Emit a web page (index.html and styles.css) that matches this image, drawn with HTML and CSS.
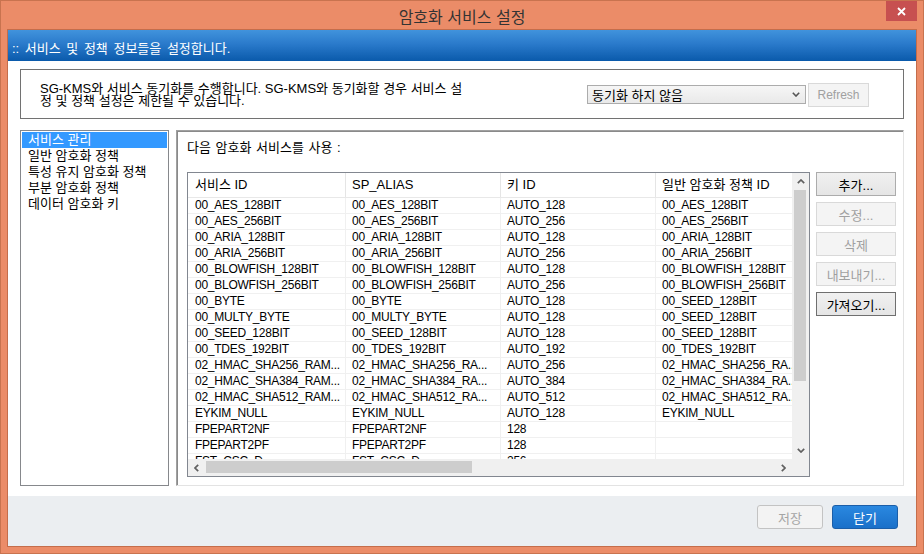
FILE: index.html
```html
<!DOCTYPE html>
<html lang="ko">
<head>
<meta charset="utf-8">
<title>암호화 서비스 설정</title>
<link rel="stylesheet" href="styles.css">
</head>
<body>
<div class="window">
  <div class="titlebar">
    <span></span>
    <span class="title">암호화 서비스 설정</span>
    <button class="close" type="button" aria-label="닫기">
      <svg width="9" height="9" viewBox="0 0 9 9"><path d="M1 1 L8 8 M8 1 L1 8" stroke="#fff" stroke-width="1.8" fill="none"/></svg>
    </button>
  </div>
  <div class="client">
    <div class="banner">:: 서비스 및 정책 정보들을 설정합니다.</div>
    <div class="main">
      <div class="info">
        <p class="info-text">SG-KMS와 서비스 동기화를 수행합니다. SG-KMS와 동기화할 경우 서비스 설<br>정 및 정책 설정은 제한될 수 있습니다.</p>
        <div class="info-controls">
          <div class="combo">
            <span>동기화 하지 않음</span>
            <svg width="8" height="5" viewBox="0 0 8 5"><polyline points="0.8,0.8 4,4 7.2,0.8" fill="none" stroke="#555" stroke-width="1.6"/></svg>
          </div>
          <button class="btn btn-small" type="button" disabled>Refresh</button>
        </div>
      </div>
      <div class="body">
        <ul class="nav">
          <li class="selected">서비스 관리</li>
          <li>일반 암호화 정책</li>
          <li>특성 유지 암호화 정책</li>
          <li>부분 암호화 정책</li>
          <li>데이터 암호화 키</li>
        </ul>
        <div class="panel">
          <div class="panel-label">다음 암호화 서비스를 사용 :</div>
          <div class="panel-content">
            <div class="listview">
              <div class="viewport">
                <div class="row head">
                  <div class="cell">서비스 ID</div>
                  <div class="cell">SP_ALIAS</div>
                  <div class="cell">키 ID</div>
                  <div class="cell">일반 암호화 정책 ID</div>
                </div>
                <div class="row"><div class="cell">00_AES_128BIT</div><div class="cell">00_AES_128BIT</div><div class="cell">AUTO_128</div><div class="cell">00_AES_128BIT</div></div>
                <div class="row"><div class="cell">00_AES_256BIT</div><div class="cell">00_AES_256BIT</div><div class="cell">AUTO_256</div><div class="cell">00_AES_256BIT</div></div>
                <div class="row"><div class="cell">00_ARIA_128BIT</div><div class="cell">00_ARIA_128BIT</div><div class="cell">AUTO_128</div><div class="cell">00_ARIA_128BIT</div></div>
                <div class="row"><div class="cell">00_ARIA_256BIT</div><div class="cell">00_ARIA_256BIT</div><div class="cell">AUTO_256</div><div class="cell">00_ARIA_256BIT</div></div>
                <div class="row"><div class="cell">00_BLOWFISH_128BIT</div><div class="cell">00_BLOWFISH_128BIT</div><div class="cell">AUTO_128</div><div class="cell">00_BLOWFISH_128BIT</div></div>
                <div class="row"><div class="cell">00_BLOWFISH_256BIT</div><div class="cell">00_BLOWFISH_256BIT</div><div class="cell">AUTO_256</div><div class="cell">00_BLOWFISH_256BIT</div></div>
                <div class="row"><div class="cell">00_BYTE</div><div class="cell">00_BYTE</div><div class="cell">AUTO_128</div><div class="cell">00_SEED_128BIT</div></div>
                <div class="row"><div class="cell">00_MULTY_BYTE</div><div class="cell">00_MULTY_BYTE</div><div class="cell">AUTO_128</div><div class="cell">00_SEED_128BIT</div></div>
                <div class="row"><div class="cell">00_SEED_128BIT</div><div class="cell">00_SEED_128BIT</div><div class="cell">AUTO_128</div><div class="cell">00_SEED_128BIT</div></div>
                <div class="row"><div class="cell">00_TDES_192BIT</div><div class="cell">00_TDES_192BIT</div><div class="cell">AUTO_192</div><div class="cell">00_TDES_192BIT</div></div>
                <div class="row"><div class="cell">02_HMAC_SHA256_RAM...</div><div class="cell">02_HMAC_SHA256_RA...</div><div class="cell">AUTO_256</div><div class="cell">02_HMAC_SHA256_RA...</div></div>
                <div class="row"><div class="cell">02_HMAC_SHA384_RAM...</div><div class="cell">02_HMAC_SHA384_RA...</div><div class="cell">AUTO_384</div><div class="cell">02_HMAC_SHA384_RA...</div></div>
                <div class="row"><div class="cell">02_HMAC_SHA512_RAM...</div><div class="cell">02_HMAC_SHA512_RA...</div><div class="cell">AUTO_512</div><div class="cell">02_HMAC_SHA512_RA...</div></div>
                <div class="row"><div class="cell">EYKIM_NULL</div><div class="cell">EYKIM_NULL</div><div class="cell">AUTO_128</div><div class="cell">EYKIM_NULL</div></div>
                <div class="row"><div class="cell">FPEPART2NF</div><div class="cell">FPEPART2NF</div><div class="cell">128</div><div class="cell"></div></div>
                <div class="row"><div class="cell">FPEPART2PF</div><div class="cell">FPEPART2PF</div><div class="cell">128</div><div class="cell"></div></div>
                <div class="row"><div class="cell">FST_CSC_D</div><div class="cell">FST_CSC_D</div><div class="cell">256</div><div class="cell"></div></div>
              </div>
              <div class="vscroll">
                <div class="arrow"><svg width="8" height="5" viewBox="0 0 8 5"><polyline points="0.8,4.2 4,1 7.2,4.2" fill="none" stroke="#606060" stroke-width="1.7"/></svg></div>
                <div class="track"><div class="thumb vthumb"></div></div>
                <div class="arrow"><svg width="8" height="5" viewBox="0 0 8 5"><polyline points="0.8,0.8 4,4 7.2,0.8" fill="none" stroke="#606060" stroke-width="1.7"/></svg></div>
              </div>
              <div class="hscroll">
                <div class="arrow"><svg width="5" height="8" viewBox="0 0 5 8"><polyline points="4.2,0.8 1,4 4.2,7.2" fill="none" stroke="#606060" stroke-width="1.7"/></svg></div>
                <div class="track"><div class="thumb hthumb"></div></div>
                <div class="arrow"><svg width="5" height="8" viewBox="0 0 5 8"><polyline points="0.8,0.8 4,4 0.8,7.2" fill="none" stroke="#606060" stroke-width="1.7"/></svg></div>
              </div>
              <div class="corner"></div>
            </div>
            <div class="actions">
              <button class="btn" type="button">추가...</button>
              <button class="btn" type="button" disabled>수정...</button>
              <button class="btn" type="button" disabled>삭제</button>
              <button class="btn" type="button" disabled>내보내기...</button>
              <button class="btn btn-focus" type="button">가져오기...</button>
            </div>
          </div>
        </div>
      </div>
    </div>
    <div class="footer">
      <button class="fbtn" type="button" disabled>저장</button>
      <button class="fbtn fbtn-primary" type="button">닫기</button>
    </div>
  </div>
</div>
</body>
</html>
```

FILE: styles.css
```css
* { box-sizing: border-box; }

html, body {
  margin: 0;
  padding: 0;
}

body {
  width: 924px;
  height: 554px;
  overflow: hidden;
  font-family: "Liberation Sans", "Noto Sans CJK KR", sans-serif;
  font-size: 13px;
  color: #000;
  background: #ea8b67;
}

button {
  font-family: inherit;
  font-size: 13px;
  margin: 0;
  padding: 0;
  cursor: default;
}

.window {
  width: 924px;
  height: 554px;
  background: #eb8c68;
  border: 1px solid #c8734f;
  padding: 0 6px 6px 6px;
  display: flex;
  flex-direction: column;
}

.titlebar {
  height: 28px;
  flex: none;
  display: grid;
  grid-template-columns: 1fr auto 1fr;
  align-items: center;
}

.title {
  font-family: "Noto Sans CJK KR", sans-serif;
  font-size: 16px;
  color: #333;
  line-height: 20px;
  padding-top: 1px;
}

.close {
  justify-self: end;
  align-self: start;
  width: 31px;
  height: 20px;
  border: none;
  background: #c75050;
  display: flex;
  align-items: center;
  justify-content: center;
}

.client {
  flex: 1;
  border: 1px solid #c46d4b;
  display: flex;
  flex-direction: column;
  background: #fff;
}

.banner {
  height: 31px;
  flex: none;
  background: linear-gradient(#4193dc, #2a7acb 45%, #0a5aab);
  color: #fff;
  padding: 3px 0 0 4px;
  display: flex;
  align-items: center;
  white-space: nowrap;
  word-spacing: 2px;
}

.main {
  flex: 1;
  background: #fff;
  padding: 8px 12px 10px 12px;
  display: flex;
  flex-direction: column;
}

.info {
  height: 50px;
  flex: none;
  border: 1px solid #727272;
  display: flex;
  align-items: center;
  padding: 1px 34px 0 19px;
}

.info-text {
  margin: 0;
  line-height: 12px;
  white-space: nowrap;
}

.info-controls {
  margin-left: auto;
  display: flex;
  gap: 2px;
  align-items: center;
}

.combo {
  width: 219px;
  height: 19px;
  border: 1px solid #acacac;
  background: linear-gradient(#f6f6f6, #e9e9e9);
  display: flex;
  align-items: center;
  justify-content: space-between;
  padding: 0 5px 0 4px;
}

.btn-small {
  width: 61px;
  height: 19px;
  font-size: 12px;
}

.body {
  flex: 1;
  margin-top: 11px;
  display: flex;
  gap: 7px;
}

.nav {
  list-style: none;
  margin: 0;
  width: 149px;
  flex: none;
  border: 1px solid #86888c;
  padding: 1px 1px;
}

.nav li {
  height: 16px;
  line-height: 16px;
  padding-left: 6px;
  white-space: nowrap;
}

.nav li.selected {
  background: #3399ff;
  color: #fff;
}

.panel {
  flex: 1;
  border-style: solid;
  border-width: 1px;
  border-color: #a0a0a0 #e3e3e3 #e3e3e3 #a0a0a0;
  box-shadow: inset 1px 1px 0 #8a8a8a;
  padding: 10px 0 0 10px;
}

.panel-label {
  line-height: 14px;
  height: 14px;
  white-space: nowrap;
  word-spacing: 1px;
}

.panel-content {
  margin-top: 17px;
  display: flex;
  gap: 6px;
  align-items: flex-start;
}

.listview {
  width: 623px;
  height: 305px;
  border: 1px solid #828790;
  display: grid;
  grid-template-columns: 604px 17px;
  grid-template-rows: 286px 17px;
  background: #fff;
}

.viewport {
  overflow: hidden;
}

.row {
  display: grid;
  grid-template-columns: 158px 155px 155px 155px;
  height: 16px;
  border-bottom: 1px solid #f0f0f0;
  width: 623px;
  font-size: 12px;
  letter-spacing: -0.25px;
}

.row.head {
  height: 25px;
  border-bottom: 1px solid #e8e8e8;
  font-size: 13px;
  letter-spacing: 0;
}

.cell {
  padding-left: 6px;
  line-height: 15px;
  white-space: nowrap;
  overflow: hidden;
  border-right: 1px solid #f0f0f0;
}

.row.head .cell {
  line-height: 22px;
  padding-top: 1px;
  border-right-color: #e5e5e5;
}

.row .cell:first-child {
  padding-left: 7px;
}

.vscroll {
  background: #f0f0f0;
  display: flex;
  flex-direction: column;
}

.vscroll .arrow {
  height: 17px;
  flex: none;
  display: flex;
  align-items: center;
  justify-content: center;
}

.vscroll .track {
  flex: 1;
}

.vthumb {
  height: 191px;
  margin: 0 3px 0 2px;
}

.hscroll {
  background: #f0f0f0;
  display: flex;
}

.hscroll .arrow {
  width: 17px;
  flex: none;
  display: flex;
  align-items: center;
  justify-content: center;
}

.hscroll .track {
  flex: 1;
  padding: 2px 0 3px 1px;
}

.hthumb {
  width: 266px;
  height: 100%;
}

.thumb {
  background: #cdcdcd;
}

.corner {
  background: #f0f0f0;
}

.actions {
  width: 80px;
  display: flex;
  flex-direction: column;
  gap: 6px;
}

.btn {
  height: 24px;
  border: 1px solid #acacac;
  background: linear-gradient(#f0f0f0, #e5e5e5);
  color: #000;
}

.btn:disabled {
  border-color: #d9d9d9;
  background: #f4f4f4;
  color: #a0a0a0;
}

.btn-focus {
  border-color: #6f6f6f;
}

.footer {
  height: 50px;
  flex: none;
  background: #ebeef1;
  display: flex;
  justify-content: flex-end;
  align-items: flex-start;
  gap: 9px;
  padding: 9px 18px 0 0;
}

.fbtn {
  width: 66px;
  height: 24px;
  border-radius: 3px;
  border: 1px solid #c3c3c3;
  background: #f3f3f3;
  color: #a5a5a5;
}

.fbtn-primary {
  border-color: #1b5ea8;
  background: linear-gradient(#2a88e0, #1a70c9);
  color: #fff;
}
```
